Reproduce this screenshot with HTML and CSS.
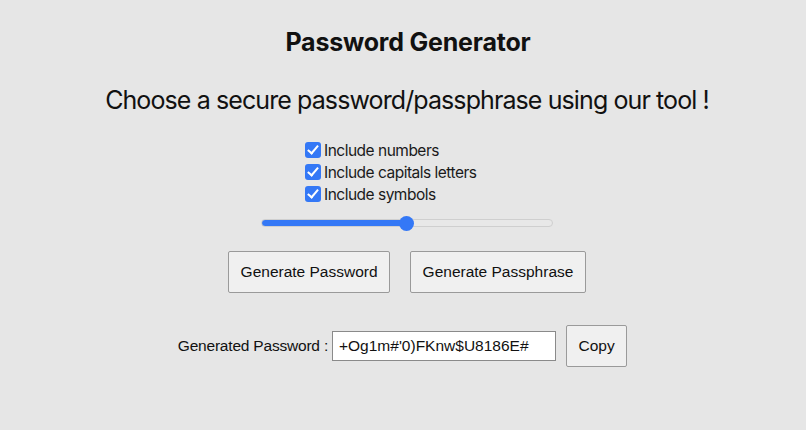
FILE: index.html
```html
<!DOCTYPE html>
<html>
<head>
<meta charset="utf-8">
<link rel="stylesheet" href="styles.css">
</head>
<body>
<main class="app">
  <h1 class="title">Password Generator</h1>
  <h2 class="subtitle">Choose a secure password/passphrase using our tool !</h2>
  <div class="options">
    <label class="opt"><input type="checkbox" class="cb" checked>Include numbers</label>
    <label class="opt"><input type="checkbox" class="cb" checked>Include capitals letters</label>
    <label class="opt"><input type="checkbox" class="cb" checked>Include symbols</label>
  </div>
  <input type="range" class="slider" min="0" max="100" value="50" style="--fill:50%">
  <div class="actions">
    <button class="btn">Generate Password</button>
    <button class="btn">Generate Passphrase</button>
  </div>
  <div class="result">
    <span class="result-label">Generated Password :</span>
    <input type="text" class="output" value="+Og1m#'0)FKnw$U8186E#">
    <button class="btn btn-copy">Copy</button>
  </div>
</main>
</body>
</html>
```
FILE: styles.css
```css
html, body {
  margin: 0;
  padding: 0;
  background: #e6e6e6;
  color: #111;
}
.app {
  display: flex;
  flex-direction: column;
  align-items: center;
  font-family: Inter, "Liberation Sans", sans-serif;
  padding-top: 26px;
}
.title {
  font-size: 25px;
  font-weight: 700;
  margin: 0;
  line-height: 32px;
  letter-spacing: -0.2px;
  padding-left: 10px;
}
.subtitle {
  font-size: 25px;
  font-weight: 400;
  margin: 26px 0 0 0;
  line-height: 32px;
  letter-spacing: -0.9px;
  padding-left: 8px;
}
.options {
  width: 200px;
  margin-top: 24px;
  display: flex;
  flex-direction: column;
}
.opt {
  display: flex;
  align-items: center;
  font-size: 15.5px;
  line-height: 22px;
  height: 22px;
  color: #1a1a1a;
  letter-spacing: -0.5px;
}
.cb {
  appearance: none;
  -webkit-appearance: none;
  width: 16px;
  height: 16px;
  margin: 0 3px 3px 2px;
  border-radius: 3px;
  background: #3478f6;
  position: relative;
  flex: none;
}
.cb::after {
  content: "";
  position: absolute;
  left: 5px;
  top: 1.5px;
  width: 4px;
  height: 9px;
  border: solid #fff;
  border-width: 0 2.5px 2.5px 0;
  transform: rotate(40deg);
}
.slider {
  -webkit-appearance: none;
  appearance: none;
  width: 292px;
  height: 8px;
  margin: 13px 0 0 7px;
  border-radius: 4px;
  background: linear-gradient(to right, #3478f6 0, #3478f6 var(--fill), #e8e8e8 var(--fill), #e8e8e8 100%);
  border: 1px solid #cfcfcf;
  box-sizing: border-box;
}
.slider::-webkit-slider-thumb {
  -webkit-appearance: none;
  width: 15px;
  height: 15px;
  border-radius: 50%;
  background: #3478f6;
}
.actions {
  display: flex;
  gap: 20px;
  margin-top: 24px;
  padding-left: 8px;
}
.btn {
  font-family: "Liberation Sans", Arial, sans-serif;
  font-size: 15.5px;
  color: #111;
  background: #f0f0f0;
  border: 1px solid #9a9a9a;
  border-radius: 2px;
  padding: 0 11.5px;
  height: 42px;
}
.result {
  display: flex;
  align-items: center;
  margin-top: 32px;
  padding-right: 1px;
}
.result-label {
  font-family: "Liberation Sans", Arial, sans-serif;
  font-size: 15.5px;
  letter-spacing: -0.2px;
  color: #111;
  margin-right: 4px;
}
.output {
  font-family: "Liberation Sans", Arial, sans-serif;
  font-size: 15.5px;
  color: #111;
  width: 224px;
  height: 30px;
  box-sizing: border-box;
  border: 1px solid #8a8a8a;
  padding: 0 6px;
  background: #fff;
  margin: 0 10px 0 0;
}
.btn-copy {
  padding: 0 11.5px;
}
```
